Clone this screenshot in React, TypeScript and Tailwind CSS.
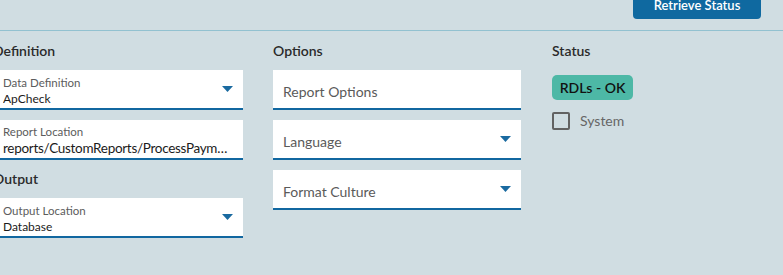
import { ReactNode } from "react";

const font = { fontFamily: '"Lato", "Liberation Sans", sans-serif' };

function Caret() {
  return (
    <svg width="11" height="6" viewBox="0 0 11 6" className="shrink-0">
      <path d="M0 0 H11 L5.5 6 Z" fill="#1a6aa0" />
    </svg>
  );
}

type FieldProps = {
  label?: string;
  value?: string;
  placeholder?: string;
  select?: boolean;
  big?: boolean;
};

function Field({ label, value, placeholder, select, big }: FieldProps) {
  return (
    <div className="flex h-[40px] items-center border-b-2 border-[#1167a0] bg-white pl-[10px] pr-[10px]">
      <div className="min-w-0 flex-1">
        {placeholder ? (
          <div className="pt-[4px] text-[14px] text-[#5a5a5a]">{placeholder}</div>
        ) : (
          <div className={big ? "pt-[3px]" : "pt-[4px]"}>
            <div className="text-[11.5px] leading-[15px] text-[#5c5c5c]">{label}</div>
            <div
              className={`truncate text-[#1b1b1b] ${big ? "text-[13.5px] leading-[18px] tracking-[-0.3px]" : "text-[12px] leading-[17px]"}`}
            >
              {value}
            </div>
          </div>
        )}
      </div>
      {select && <Caret />}
    </div>
  );
}

function Heading({ children, top }: { children: ReactNode; top?: boolean }) {
  return (
    <div
      className={`h-[22px] text-[14px] font-semibold leading-[22px] text-[#2a2a2a] ${top ? "mb-[8px]" : "my-[8px]"}`}
    >
      {children}
    </div>
  );
}

export default function App() {
  return (
    <div style={font} className="h-[275px] w-[783px] overflow-hidden bg-[#d0dde2]">
      {/* top bar */}
      <div className="flex h-[31px] justify-end border-b border-[#92c1d0] pr-[22px]">
        <button className="-mt-[8px] h-[27px] w-[128px] rounded-[4px] bg-[#0f69a0] text-[13px] font-semibold text-white">
          Retrieve Status
        </button>
      </div>

      <div className="-ml-[7px] grid grid-cols-[250px_248px_200px] gap-x-[30px] pt-[9px]">
        {/* definition / output */}
        <div className="flex flex-col">
          <Heading top>Definition</Heading>
          <div className="flex flex-col gap-[10px]">
            <Field label="Data Definition" value="ApCheck" select />
            <Field
              label="Report Location"
              value="reports/CustomReports/ProcessPaymentsReport.rdl"
              big
            />
          </div>
          <Heading>Output</Heading>
          <Field label="Output Location" value="Database" select />
        </div>

        {/* options */}
        <div className="flex flex-col">
          <Heading top>Options</Heading>
          <div className="flex flex-col gap-[10px]">
            <Field placeholder="Report Options" />
            <Field placeholder="Language" select />
            <Field placeholder="Format Culture" select />
          </div>
        </div>

        {/* status */}
        <div className="ml-[1px] flex flex-col">
          <Heading top>Status</Heading>
          <div className="mt-[5px] flex h-[25px] w-[81px] items-center justify-center rounded-[5px] bg-[#4db8a6] text-[14px] font-semibold text-[#111]">
            RDLs - OK
          </div>
          <label className="mt-[10px] flex items-center gap-[10px]">
            <span className="h-[18px] w-[18px] rounded-[2px] border-2 border-[#626262]" />
            <span className="text-[14px] text-[#666]">System</span>
          </label>
        </div>
      </div>
    </div>
  );
}
